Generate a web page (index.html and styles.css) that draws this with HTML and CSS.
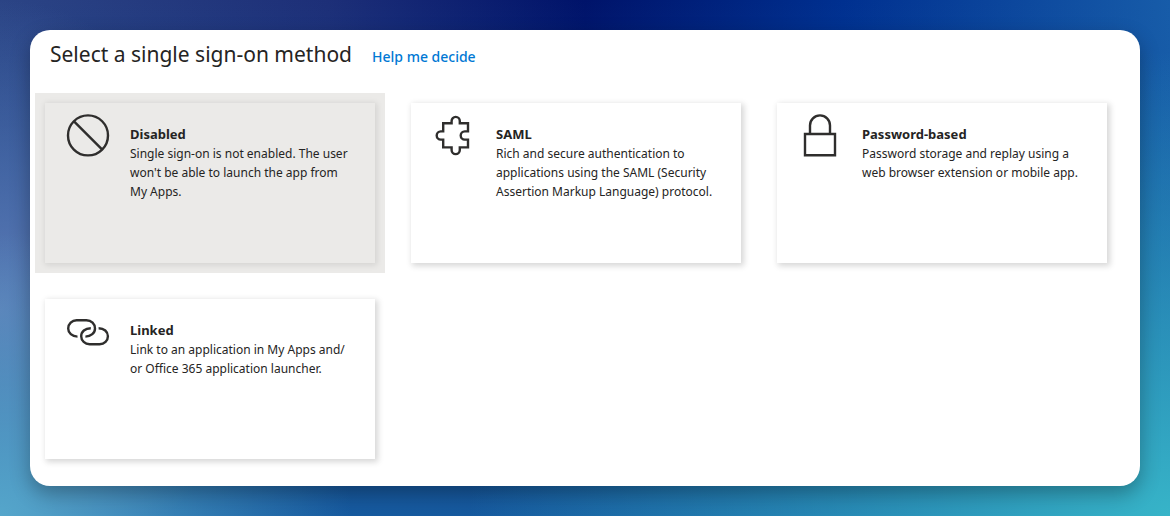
FILE: index.html
```
<!DOCTYPE html>
<html lang="en">
<head>
    <meta charset="UTF-8">
    <meta name="viewport" content="width=device-width, initial-scale=1.0">
    <title>Single sign-on</title>
    <link rel="stylesheet" href="styles.css">
</head>
<body>
    <main class="panel">
        <header class="panel-header">
            <h1>Select a single sign-on method</h1>
            <a href="#" class="help-link">Help me decide</a>
        </header>

        <ul class="method-grid">
            <li class="method selected">
                <button type="button" class="method-card" aria-pressed="true">
                    <svg class="method-icon" viewBox="0 0 42 42" aria-hidden="true">
                        <circle cx="21" cy="21.4" r="20"/>
                        <path d="M7 7.4L35 35.4"/>
                    </svg>
                    <span class="method-text">
                        <strong>Disabled</strong>
                        <span>Single sign-on is not enabled. The user won't be able to launch the app from My Apps.</span>
                    </span>
                </button>
            </li>
            <li class="method">
                <button type="button" class="method-card" aria-pressed="false">
                    <svg class="method-icon" viewBox="0 0 42 42" aria-hidden="true">
                        <path d="M10.2 9.2H18.6V7a4.1 4.1 0 0 1 8.2 0V9.2H35V17.4H31.8a4.1 4.1 0 0 0 0 8.2H35V33.4H26.8V36a4.1 4.1 0 0 1-8.2 0V33.4H10.2V25.6H7.8a4.1 4.1 0 0 1 0-8.2H10.2Z"/>
                    </svg>
                    <span class="method-text">
                        <strong>SAML</strong>
                        <span>Rich and secure authentication to applications using the SAML (Security Assertion Markup Language) protocol.</span>
                    </span>
                </button>
            </li>
            <li class="method">
                <button type="button" class="method-card" aria-pressed="false">
                    <svg class="method-icon" viewBox="0 0 42 42" aria-hidden="true">
                        <path d="M6 20H36V41.2H6Z"/>
                        <path d="M11 20V11.4a10 10 0 0 1 20 0V20"/>
                    </svg>
                    <span class="method-text">
                        <strong>Password-based</strong>
                        <span>Password storage and replay using a web browser extension or mobile app.</span>
                    </span>
                </button>
            </li>
            <li class="method">
                <button type="button" class="method-card" aria-pressed="false">
                    <svg class="method-icon" viewBox="0 0 42 42" aria-hidden="true">
                        <path d="M10.5 26.6C5 26.6 1.2 23 1.2 18.4S5 10.2 9.6 10.2H19.4C24.4 10.2 28 13.8 28 18.4C28 23 24 26.4 18.4 26.6"/>
                        <path d="M23.8 18.2C18 18.2 14.2 21.6 14.2 26.2S18 34.2 22.6 34.2H32.6C37.4 34.2 40.9 30.8 40.9 26.2S37 18.2 31.6 18.2"/>
                    </svg>
                    <span class="method-text">
                        <strong>Linked</strong>
                        <span>Link to an application in My Apps and/<wbr>or Office 365 application launcher.</span>
                    </span>
                </button>
            </li>
        </ul>
    </main>
</body>
</html>
```
FILE: styles.css
```
/* Base Reset */
* {
    margin: 0;
    padding: 0;
    box-sizing: border-box;
}

body {
    font-family: 'Segoe UI', 'Noto Sans', 'Open Sans', sans-serif;
    color: #252423;
    min-height: 100vh;
    padding: 30px;
    background:
        radial-gradient(ellipse 60% 90% at 100% 100%, #37b4c8, transparent),
        radial-gradient(ellipse 30% 55% at 0% 100%, #55a6cb, transparent),
        radial-gradient(ellipse 20% 60% at 0% 60%, #5d7bb6, transparent),
        linear-gradient(to bottom, transparent, #165a9f),
        linear-gradient(to right, #2b4485, #1d2f78 28%, #00136a 50%, #003090 72%, #175ca9);
}

/* Panel */
.panel {
    background: #fff;
    border-radius: 20px;
    box-shadow: 0 8px 20px rgba(0, 0, 0, 0.3);
    padding: 8px 23px 17px 5px;
}

.panel-header {
    display: flex;
    align-items: baseline;
    gap: 20px;
    padding: 0 15px;
    margin-bottom: 23px;
}

.panel-header h1 {
    font-size: 21px;
    font-weight: 400;
    line-height: 32px;
}

.help-link {
    color: #0078d4;
    font-size: 14px;
    font-weight: 500;
    text-decoration: none;
}

.help-link:hover {
    text-decoration: underline;
}

/* Method Grid */
.method-grid {
    display: grid;
    grid-template-columns: repeat(3, 1fr);
    gap: 16px;
    list-style: none;
}

.method {
    padding: 10px;
}

.method.selected {
    background: #ebeae8;
}

.method-card {
    display: flex;
    align-items: flex-start;
    gap: 21px;
    width: 100%;
    min-height: 160px;
    padding: 11px 20px 11px 22px;
    border: none;
    background: #fff;
    box-shadow: 2px 2px 6px 1px rgba(0, 0, 0, 0.16);
    color: inherit;
    font-family: inherit;
    text-align: left;
    cursor: pointer;
}

.selected .method-card {
    background: #ebeae8;
    box-shadow: 1px 1px 6px 1px rgba(0, 0, 0, 0.1);
}

.method-icon {
    flex: none;
    width: 42px;
    height: 42px;
    overflow: visible;
    fill: none;
    stroke: #2f2e2d;
    stroke-width: 2.4;
}

/* Method Text */
.method-text {
    display: flex;
    flex-direction: column;
    padding-top: 11px;
    font-size: 12px;
    line-height: 19px;
}

.method-text strong {
    font-size: 13px;
    font-weight: 700;
}

@media (max-width: 900px) {
    .method-grid {
        grid-template-columns: 1fr;
    }
}
```
